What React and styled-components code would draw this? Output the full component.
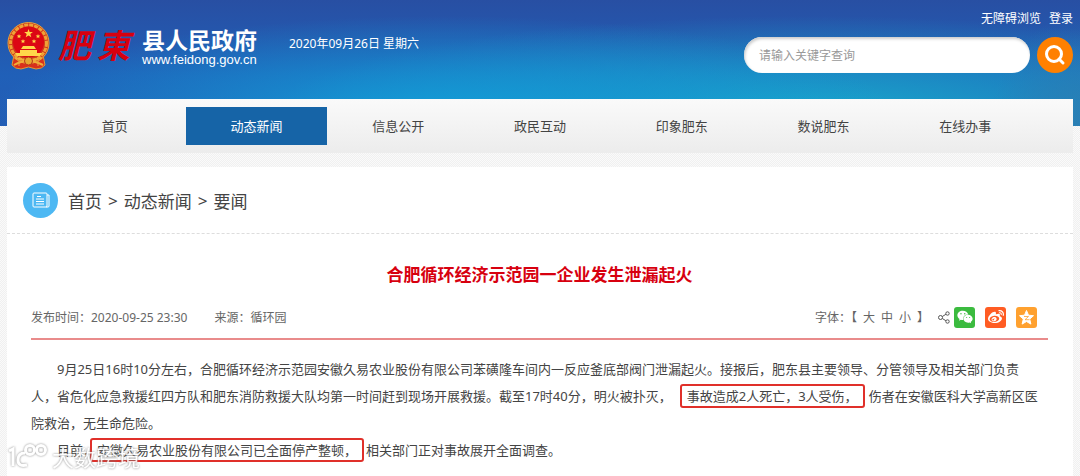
import React from "react";
import styled, { createGlobalStyle } from "styled-components";
import { FaWeixin, FaWeibo } from "react-icons/fa";

const GlobalStyle = createGlobalStyle`
  * {
    box-sizing: border-box;
  }
  body {
    margin: 0;
    color: #444;
    font-family: "Noto Sans", "Noto Sans CJK SC", sans-serif;
    font-size: 12px;
    background: conic-gradient(#f0f0f0 25%, #fafafa 0 50%, #f0f0f0 0 75%, #fafafa 0) 0 0 / 2px 2px;
  }
  a {
    color: inherit;
    text-decoration: none;
  }
  button,
  input {
    font-family: inherit;
  }
`;

const Page = styled.div`
  position: relative;
  display: flex;
  flex-direction: column;
  min-height: 100vh;
  padding: 0 7px;
  overflow: hidden;
  background:
    radial-gradient(ellipse 90px 110px at 100% 126px, #2a7fb4 0%, transparent 100%) top / 100% 126px no-repeat,
    radial-gradient(ellipse 42% 100px at 41% 116px, #129fd8 0%, rgba(18, 159, 216, 0) 100%) top / 100% 126px no-repeat,
    radial-gradient(ellipse 50% 100px at 75% 116px, #18abcd 0%, rgba(24, 171, 205, 0) 100%) top / 100% 126px no-repeat,
    linear-gradient(#284fa3, #2060b8 60%, #245cb4) top / 100% 126px no-repeat;
`;

const Header = styled.header`
  display: flex;
  height: 99px;
  color: #fff;
`;

const Brand = styled.a`
  display: flex;
  align-items: center;
  height: 92px;
`;

const Script = styled.span`
  display: flex;
  gap: 6px;
  width: 84px;
  margin-left: 8px;
  color: #d7000f;
  font-size: 33px;
  font-style: italic;
  font-weight: 700;
  line-height: 48px;
`;

const SiteName = styled.span`
  display: flex;
  flex-direction: column;
  font-size: 23px;
  font-weight: 700;
  line-height: 28px;
`;

const SiteUrl = styled.span`
  font-family: "Liberation Sans", sans-serif;
  font-size: 13px;
  font-weight: 400;
  line-height: 12px;
`;

const Today = styled.time`
  margin-left: 32px;
  line-height: 88px;
`;

const Tools = styled.div`
  display: flex;
  flex-direction: column;
  gap: 8px;
  width: 329px;
  margin-left: auto;
  padding-top: 9px;
`;

const TopLinks = styled.div`
  display: flex;
  justify-content: flex-end;
  gap: 8px;
  line-height: 20px;
`;

const Search = styled.form`
  display: flex;
  gap: 7px;
`;

const SearchInput = styled.input`
  flex: 1;
  min-width: 0;
  height: 36px;
  padding: 0 15px;
  border: 0;
  border-radius: 18px;
  background: #fff;
  box-shadow: inset 1px 2px 3px #ccc;
  font-size: 12px;
  &::placeholder {
    color: #999;
  }
`;

const SearchButton = styled.button`
  display: grid;
  place-items: center;
  width: 36px;
  height: 36px;
  padding: 0;
  border: 0;
  border-radius: 50%;
  background: #ff8000;
`;

const Nav = styled.nav`
  display: flex;
  height: 54px;
  padding: 8px 37px;
  background: linear-gradient(#fafafa, #ececec);
`;

const NavLink = styled.a`
  flex: 1;
  font-size: 13px;
  line-height: 38px;
  text-align: center;
  color: ${props => (props.$active ? "#fff" : "#444")};
  background: ${props => (props.$active ? "#1664a7" : "none")};
`;

const Panel = styled.main`
  flex: 1;
  margin-top: 14px;
  background: #fff;
`;

const Breadcrumb = styled.div`
  display: flex;
  align-items: center;
  gap: 6px;
  height: 67px;
  padding-left: 16px;
  border-bottom: 1px dashed #ddd;
  font-size: 17px;
`;

const CrumbIcon = styled.span`
  display: grid;
  place-items: center;
  width: 35px;
  height: 35px;
  margin-right: 4px;
  border-radius: 50%;
  background: #4db8f3;
`;

const Article = styled.article`
  padding: 24px 25px 8px 24px;
`;

const Title = styled.h1`
  margin: 0;
  color: #d7000f;
  font-size: 17px;
  line-height: 34px;
  text-align: center;
`;

const Meta = styled.div`
  display: flex;
  align-items: center;
  gap: 27px;
  height: 44px;
  margin-top: 4px;
  border-bottom: 2px solid #e98b8b;
  color: #666;
`;

const FontSize = styled.div`
  display: flex;
  align-items: center;
  gap: 6px;
  margin-left: auto;
`;

const SizeButton = styled.button`
  padding: 0;
  border: 0;
  background: none;
  color: inherit;
  font-size: 12px;
`;

const Share = styled.div`
  display: flex;
  align-items: center;
  gap: 4px;
  margin: 0 11px 0 -18px;
`;

const ShareLinks = styled.div`
  display: flex;
  gap: 10px;
`;

const ShareLink = styled.a`
  display: grid;
  place-items: center;
  width: 21px;
  height: 21px;
  border-radius: 3px;
  background: ${props => props.$color};
  color: #fff;
`;

const Body = styled.div`
  padding-top: 16px;
  font-size: 13px;
  line-height: 27px;
  white-space: nowrap;
  p {
    margin: 0;
    text-indent: 2em;
  }
`;

const Marked = styled.mark`
  margin: ${props => (props.$overlap ? "0 2px 0 -6px" : "0 4px 0 8px")};
  padding: 1px 5px;
  border: 2px solid #e0302a;
  border-radius: 3px;
  background: none;
  color: inherit;
`;

const Watermark = styled.div`
  position: absolute;
  left: 8px;
  bottom: 5px;
  display: flex;
  align-items: center;
  gap: 4px;
  color: #fff;
  font-size: 22px;
  line-height: 28px;
  opacity: 0.85;
  filter: drop-shadow(0 0 1px #777);
`;

const Emblem = () => (
  <svg width="43" height="48" viewBox="0 0 43 48" aria-hidden="true">
    <path d="M7 33 5 43q3 4 9 4l7.500-2 7.500 2q6 0 9-4l-2-10z" fill="#d8311c" stroke="#e09a35" />
    <circle cx="21.500" cy="21" r="20.500" fill="#cf3a1c" stroke="#e8a23b" />
    <circle cx="21.500" cy="21" r="18" fill="none" stroke="#f0a236" strokeWidth="3" strokeDasharray="4 1" />
    <circle cx="21.500" cy="20" r="15.500" fill="#dc0714" />
    <path d="m21.500 7 1.100 3.100h3.300l-2.600 2 1 3.200-2.800-1.900-2.800 1.900 1-3.200-2.600-2h3.300z" fill="#ffd64a" />
    <g fill="#ffd64a">
      <path id="star" d="m12 12 .6 1.600h1.700L13 14.700l.5 1.600-1.500-1-1.500 1 .5-1.600-1.300-1.100h1.700z" />
      <use href="#star" x="19" />
      <use href="#star" x="4" y="5" />
      <use href="#star" x="15" y="5" />
      <path d="M16 24h11l2 3H14zM13 28h17v3H13zM8 31h27l-2 3H10z" />
    </g>
    <path d="M8 36q13 4 27 0M7 43q7-4 14-4t15 4" fill="none" stroke="#efae3a" strokeWidth="2" />
    <circle cx="21.500" cy="39" r="4" fill="#e6a62e" stroke="#b9351a" />
    <path d="M12 38v6M31 38v6" stroke="#e9a63a" />
  </svg>
);

const navItems = ["首页", "动态新闻", "信息公开", "政民互动", "印象肥东", "数说肥东", "在线办事"];

const App = () => (
  <Page>
    <GlobalStyle />
    <Header>
      <Brand href="#">
        <Emblem />
        <Script>
          <span>肥</span>
          <span>東</span>
        </Script>
        <SiteName>
          县人民政府
          <SiteUrl>www.feidong.gov.cn</SiteUrl>
        </SiteName>
      </Brand>
      <Today dateTime="2020-09-26">2020年09月26日 星期六</Today>
      <Tools>
        <TopLinks>
          <a href="#">无障碍浏览</a>
          <a href="#">登录</a>
        </TopLinks>
        <Search onSubmit={e => e.preventDefault()}>
          <SearchInput aria-label="请输入关键字查询" placeholder="请输入关键字查询" />
          <SearchButton aria-label="查询">
            <svg width="22" height="22" viewBox="0 0 22 22" fill="none" stroke="#fff" strokeWidth="3">
              <circle cx="10" cy="10" r="7.500" />
              <path d="m15 15 4 4" strokeLinecap="round" />
            </svg>
          </SearchButton>
        </Search>
      </Tools>
    </Header>
    <Nav>
      {navItems.map(item => (
        <NavLink key={item} href="#" $active={item === "动态新闻"}>
          {item}
        </NavLink>
      ))}
    </Nav>
    <Panel>
      <Breadcrumb>
        <CrumbIcon>
          <svg width="18" height="16" viewBox="0 0 18 16" fill="none" stroke="#fff">
            <rect x="1" y="1" width="14" height="14" rx="1" />
            <path d="M15 3h2v11q0 1-1 1h-2M5 4.500h4M4 7h8M4 9.500h8M4 12h8" />
          </svg>
        </CrumbIcon>
        <a href="#">首页</a>
        <span>&gt;</span>
        <a href="#">动态新闻</a>
        <span>&gt;</span>
        <a href="#">要闻</a>
      </Breadcrumb>
      <Article>
        <Title>合肥循环经济示范园一企业发生泄漏起火</Title>
        <Meta>
          <span>发布时间：2020-09-25 23:30</span>
          <span>来源：循环园</span>
          <FontSize>
            <span>字体：【</span>
            <SizeButton>大</SizeButton>
            <SizeButton>中</SizeButton>
            <SizeButton>小</SizeButton>
            <span>】</span>
          </FontSize>
          <Share>
            <svg width="12" height="13" viewBox="0 0 12 13" fill="none" stroke="#555">
              <circle cx="2.500" cy="6.500" r="2" />
              <circle cx="9.500" cy="2.500" r="1.700" />
              <circle cx="9.500" cy="10.500" r="1.700" />
              <path d="m4.300 5.500 3.600-2.200M4.300 7.500l3.600 2.200" />
            </svg>
            <ShareLinks>
              <ShareLink href="#" aria-label="微信" $color="#3bbb3f">
                <FaWeixin size={16} />
              </ShareLink>
              <ShareLink href="#" aria-label="微博" $color="#ff5c23">
                <FaWeibo size={16} />
              </ShareLink>
              <ShareLink href="#" aria-label="QQ空间" $color="#ffa12f">
                <svg width="15" height="15" viewBox="0 0 15 15">
                  <path
                    d="m7.500.5 2 4.700 5 .5-3.800 3.400 1.200 5-4.400-2.600-4.400 2.600 1.200-5L.5 5.700l5-.5z"
                    fill="#fff"
                    stroke="#fff"
                    strokeLinejoin="round"
                  />
                  <path d="M5 6.500h4.500L6 9.700h4.500" fill="none" stroke="#ffa12f" strokeWidth=".8" />
                </svg>
              </ShareLink>
            </ShareLinks>
          </Share>
        </Meta>
        <Body>
          <p>
            9月25日16时10分左右，合肥循环经济示范园安徽久易农业股份有限公司苯磺隆车间内一反应釜底部阀门泄漏起火。接报后，肥东县主要领导、分管领导及相关部门负责
            <br />
            人，省危化应急救援红四方队和肥东消防救援大队均第一时间赶到现场开展救援。截至17时40分，明火被扑灭，
            <Marked>事故造成2人死亡，3人受伤，</Marked>
            伤者在安徽医科大学高新区医
            <br />
            院救治，无生命危险。
          </p>
          <p>
            目前，<Marked $overlap>安徽久易农业股份有限公司已全面停产整顿，</Marked>
            相关部门正对事故展开全面调查。
          </p>
        </Body>
      </Article>
    </Panel>
    <Watermark>
      <svg width="40" height="28" viewBox="0 0 40 28" fill="none" stroke="#fff" strokeWidth="3">
        <path d="m1 8 4-2v17M17 10q-7 0-7 7t9 5" />
        <circle cx="22" cy="7" r="4.500" />
        <circle cx="33" cy="7" r="4.500" />
      </svg>
      大数跨境
    </Watermark>
  </Page>
);

export default App;
